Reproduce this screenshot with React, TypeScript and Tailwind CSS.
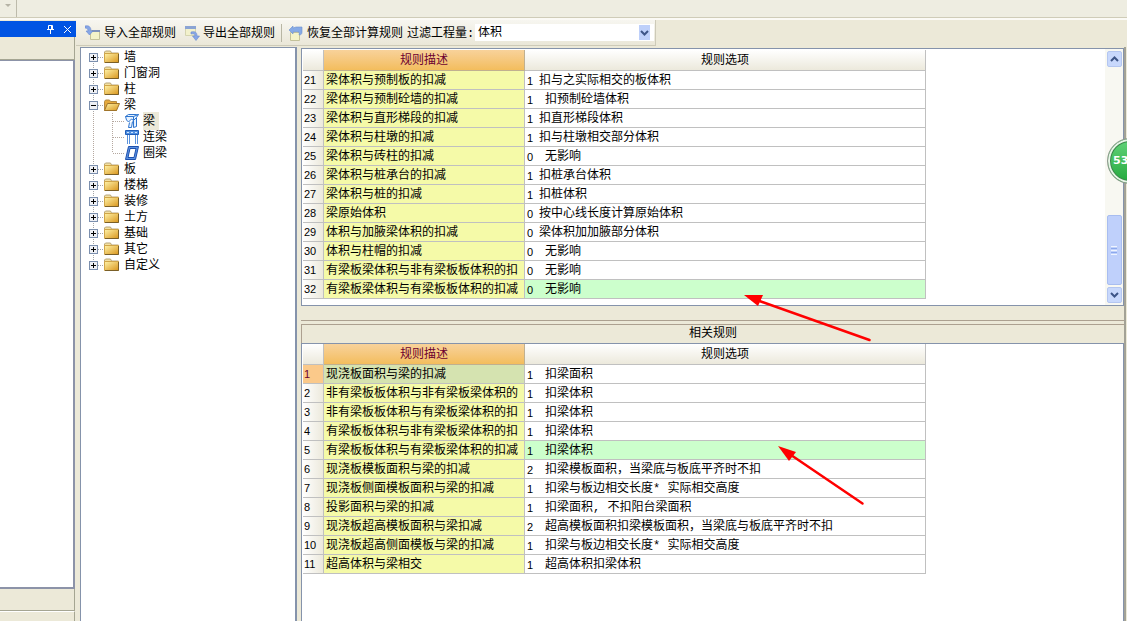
import { useState } from 'react';
import clsx from 'clsx';

interface Rule {
  id: number;
  name: string;
  code: number;
  option: string;
  tight?: boolean;
  marked?: boolean;
  current?: boolean;
}

const rules: Rule[] = [
  { id: 21, name: '梁体积与预制板的扣减', code: 1, option: '扣与之实际相交的板体积', tight: true },
  { id: 22, name: '梁体积与预制砼墙的扣减', code: 1, option: '扣预制砼墙体积' },
  { id: 23, name: '梁体积与直形梯段的扣减', code: 1, option: '扣直形梯段体积', tight: true },
  { id: 24, name: '梁体积与柱墩的扣减', code: 1, option: '扣与柱墩相交部分体积', tight: true },
  { id: 25, name: '梁体积与砖柱的扣减', code: 0, option: '无影响' },
  { id: 26, name: '梁体积与桩承台的扣减', code: 1, option: '扣桩承台体积', tight: true },
  { id: 27, name: '梁体积与桩的扣减', code: 1, option: '扣桩体积', tight: true },
  { id: 28, name: '梁原始体积', code: 0, option: '按中心线长度计算原始体积', tight: true },
  { id: 29, name: '体积与加腋梁体积的扣减', code: 0, option: '梁体积加加腋部分体积', tight: true },
  { id: 30, name: '体积与柱帽的扣减', code: 0, option: '无影响' },
  { id: 31, name: '有梁板梁体积与非有梁板板体积的扣', code: 0, option: '无影响' },
  { id: 32, name: '有梁板梁体积与有梁板板体积的扣减', code: 0, option: '无影响', marked: true },
];

const relatedRules: Rule[] = [
  { id: 1, name: '现浇板面积与梁的扣减', code: 1, option: '扣梁面积', current: true },
  { id: 2, name: '非有梁板板体积与非有梁板梁体积的', code: 1, option: '扣梁体积' },
  { id: 3, name: '非有梁板板体积与有梁板梁体积的扣', code: 1, option: '扣梁体积' },
  { id: 4, name: '有梁板板体积与非有梁板梁体积的扣', code: 1, option: '扣梁体积' },
  { id: 5, name: '有梁板板体积与有梁板梁体积的扣减', code: 1, option: '扣梁体积', marked: true },
  { id: 6, name: '现浇板模板面积与梁的扣减', code: 2, option: '扣梁模板面积，当梁底与板底平齐时不扣' },
  { id: 7, name: '现浇板侧面模板面积与梁的扣减', code: 1, option: '扣梁与板边相交长度* 实际相交高度' },
  { id: 8, name: '投影面积与梁的扣减', code: 1, option: '扣梁面积, 不扣阳台梁面积' },
  { id: 9, name: '现浇板超高模板面积与梁扣减', code: 2, option: '超高模板面积扣梁模板面积，当梁底与板底平齐时不扣' },
  { id: 10, name: '现浇板超高侧面模板与梁的扣减', code: 1, option: '扣梁与板边相交长度* 实际相交高度' },
  { id: 11, name: '超高体积与梁相交', code: 1, option: '超高体积扣梁体积' },
];

const categories = ['墙', '门窗洞', '柱', '梁', '板', '楼梯', '装修', '土方', '基础', '其它', '自定义'];
const beams = ['梁', '连梁', '圈梁'];

function ImportIcon() {
  return (
    <svg width="16" height="16" viewBox="0 0 16 16" aria-hidden="true">
      <path d="M5.500 5.500h9v9h-9z" fill="#f4f3c9" stroke="#c4c29a" />
      <path d="M7 5h8v2H7z" fill="#7f92ba" />
      <path d="M0 1c4-1 6 1 6 5h2L4.500 10 1 6h2c0-2-1-3-3-3z" fill="#86a6e6" stroke="#6a8ad0" strokeWidth=".6" />
    </svg>
  );
}

function ExportIcon() {
  return (
    <svg width="16" height="16" viewBox="0 0 16 16" aria-hidden="true">
      <path d="M1.500 1.500h10v9h-10z" fill="#f2f1cc" stroke="#d5d4b0" />
      <path d="M1 1h11v3H1z" fill="#8ba4d4" />
      <path d="M7 7c4-1 6 0 6 4h2.500L12 15.500 8.500 11H11c0-2-1-2.500-4-2z" fill="#86a6e6" stroke="#6a8ad0" strokeWidth=".6" />
    </svg>
  );
}

function RestoreIcon() {
  return (
    <svg width="16" height="16" viewBox="0 0 16 16" aria-hidden="true">
      <path d="M2.500 7.500h9v8h-9z" fill="#f4f3c9" stroke="#c4c29a" />
      <path d="M1 5l4-4v2l3-1h6v5c0 2-1 3-3 3 1-3 0-4-6-3v2z" fill="#86aae6" stroke="#6c90d0" strokeWidth=".6" />
    </svg>
  );
}

function FolderIcon({ open }: { open?: boolean }) {
  return (
    <svg width="16" height="16" viewBox="0 0 16 16" aria-hidden="true">
      <defs>
        <linearGradient id="folder" x1="0" y1="0" x2="1" y2="1">
          <stop offset="0" stopColor="#fff3a8" />
          <stop offset="1" stopColor="#d9951c" />
        </linearGradient>
      </defs>
      {open ? (
        <>
          <path d="M.5 13.500V4.500l1-1.500h4l1 1.500h6v9z" fill="#e5a93b" stroke="#b58a42" />
          <path d="M.5 13.500l3-7h12l-3 7z" fill="url(#folder)" stroke="#a0742a" />
        </>
      ) : (
        <>
          <path d="M.5 5V3l1-1h5l1 2h7v2z" fill="#f3e0a0" stroke="#b8a578" />
          <path d="M.5 4.500h14v9H.5z" fill="url(#folder)" stroke="#d0a548" />
          <path d="M14.500 5v8.500H1" fill="none" stroke="#7a5f28" />
        </>
      )}
    </svg>
  );
}

function BeamIcon({ kind }: { kind: number }) {
  return (
    <svg width="14" height="16" viewBox="0 0 14 16" fill="#e6f2ff" stroke="#2d74cf" aria-hidden="true">
      {kind === 0 && (
        <>
          <path d="M.5 3.500l3-2h10l-2 3v9l-3 1v-7l-2-1.500-3 3-2-2z" />
          <path d="M.5 3.500h8l5-2M8.500 3.500v4l3-3M4.500 9.500l-1 5h3l1-6" />
        </>
      )}
      {kind === 1 && (
        <>
          <path d="M.5 1.500h13v4H.5z" fill="#4f8fe0" stroke="#1f5db8" />
          <path d="M2.500 6v9M4.500 6v9M10.500 6v9M12.500 6v9" stroke="#5a92dd" />
          <path d="M2 3.500h2M6 3.500h2M10 3.500h2" stroke="#cfe3ff" />
        </>
      )}
      {kind === 2 && (
        <>
          <path d="M3.500 1.500h10l-3 13H.5z" fill="#5b93e2" stroke="#1d4fae" />
          <path d="M5 3.500h6l-2 9H3z" fill="#fff" stroke="#1d4fae" />
        </>
      )}
    </svg>
  );
}

// dotted guide plus the plus/minus box
function Expander({ open, first, last }: { open: boolean; first: boolean; last: boolean }) {
  return (
    <svg width="15" height="16" viewBox="0 0 15 16" aria-hidden="true">
      <path d={first ? 'M4.500 8v8' : last ? 'M4.500 0v8' : 'M4.500 0v16'} stroke="#a5a5a5" strokeDasharray="1 1" />
      <path d="M9 8.500h6" stroke="#a5a5a5" strokeDasharray="1 1" />
      <rect x=".5" y="4.500" width="8" height="8" fill="#eef0f5" stroke="#7b8fae" />
      <path d={open ? 'M2 8.500h5' : 'M2 8.500h5M4.500 6v5'} stroke="#000" />
    </svg>
  );
}

function Tree() {
  const [openName, setOpenName] = useState('梁');

  return (
    <nav className="w-[217px] shrink-0 border border-r-2 border-b-0 border-[#8593ab] bg-white pt-px pl-2">
      <ul>
        {categories.map((name, i) => {
          const open = name === openName;
          return (
            <li key={name}>
              <div className="flex h-4 items-center">
                <button type="button" aria-label={name} aria-expanded={open} onClick={() => setOpenName(open ? '' : name)}>
                  <Expander open={open} first={i === 0} last={i === categories.length - 1} />
                </button>
                <FolderIcon open={open} />
                <span className="pt-0.5 pl-1">{name}</span>
              </div>
              {open && (
                <ul>
                  {beams.map((beam, j) => (
                    <li key={beam} className="flex h-4 items-center">
                      <svg width="36" height="16" viewBox="0 0 36 16" aria-hidden="true">
                        <path
                          d={j === beams.length - 1 ? 'M4.500 0v16M23.500 0v8M24 8.500h12' : 'M4.500 0v16M23.500 0v16M24 8.500h12'}
                          fill="none"
                          stroke="#b5a8a0"
                          strokeDasharray="1 1"
                        />
                      </svg>
                      <BeamIcon kind={j} />
                      <a href="#rules" className={clsx('ml-1 pt-0.5 pr-1', j === 0 && 'bg-[#ece9d8]')}>
                        {beam}
                      </a>
                    </li>
                  ))}
                </ul>
              )}
            </li>
          );
        })}
      </ul>
    </nav>
  );
}

function RuleTable({ rows }: { rows: Rule[] }) {
  return (
    <table className="ml-px w-[623px] table-fixed border-separate border-spacing-0">
      <colgroup>
        <col className="w-[21px]" />
        <col className="w-[201px]" />
        <col className="w-[401px]" />
      </colgroup>
      <thead>
        <tr className="h-[21px]">
          <th className="border-r border-b border-[#c0c0c0] bg-linear-to-b from-white to-[#ece9dc]" />
          <th className="border-r border-b border-[#c0b090] bg-linear-to-b from-[#f8d29a] to-[#f3bd5c] p-0 pt-0.5 font-normal text-[#6b0030]">
            规则描述
          </th>
          <th className="border-r border-b border-[#c0c0c0] bg-linear-to-b from-white to-[#ece9dc] p-0 pt-0.5 font-normal">
            规则选项
          </th>
        </tr>
      </thead>
      <tbody>
        {rows.map((rule) => (
          <tr key={rule.id} className="h-[19px]">
            <td
              className={clsx(
                'border-r border-b border-[#c0c0c0] p-0 pl-px font-["Liberation_Sans",sans-serif] text-[11px]',
                rule.current ? 'bg-[#fbc98a] text-[#6b0030]' : 'bg-linear-to-r from-white to-[#ece9dc]',
              )}
            >
              {rule.id}
            </td>
            <td
              className={clsx(
                'overflow-hidden border-r border-b border-[#c0c0c0] p-0 pt-0.5 pl-0.5 whitespace-nowrap',
                rule.current ? 'bg-[#d5e3b0]' : 'bg-[#f5faa8]',
              )}
            >
              {rule.name}
            </td>
            <td className={clsx('border-r border-b border-[#c0c0c0] p-0 pt-0.5 pl-0.5', rule.marked && 'bg-[#ccffcc]')}>
              <div className="flex items-center">
                <span className={clsx('font-["Liberation_Sans",sans-serif] text-[11px]', rule.tight ? 'w-3' : 'w-[18px]')}>
                  {rule.code}
                </span>
                <span className="whitespace-nowrap">{rule.option}</span>
              </div>
            </td>
          </tr>
        ))}
      </tbody>
    </table>
  );
}

function Chevron({ up }: { up?: boolean }) {
  return (
    <svg width="9" height="6" viewBox="0 0 9 6" fill="none" stroke="#3d5587" strokeWidth="2" aria-hidden="true">
      <path d={up ? 'M1 5l3.500-3.500L8 5' : 'M1 1l3.500 3.500L8 1'} />
    </svg>
  );
}

function ScrollBar() {
  return (
    <div className="flex w-[18px] shrink-0 flex-col items-center bg-[#f8f8f2] py-0.5">
      <button type="button" aria-label="向上" className="flex h-4 w-[15px] items-center justify-center rounded-xs border border-[#b4c6f0] bg-[#c8d8fc]">
        <Chevron up />
      </button>
      <div className="flex-1" />
      <div className="mb-0.5 flex h-[70px] w-[15px] flex-col items-center justify-center gap-px rounded-xs border border-[#a8bdf0] bg-[#bfd0fb]">
        <i className="h-px w-1.5 bg-[#eef4fe]" />
        <i className="h-px w-1.5 bg-[#8ca9ec]" />
        <i className="h-px w-1.5 bg-[#eef4fe]" />
        <i className="h-px w-1.5 bg-[#8ca9ec]" />
        <i className="h-px w-1.5 bg-[#eef4fe]" />
      </div>
      <button type="button" aria-label="向下" className="flex h-4 w-[15px] items-center justify-center rounded-xs border border-[#b4c6f0] bg-[#c8d8fc]">
        <Chevron />
      </button>
    </div>
  );
}

function SidePanel() {
  return (
    <aside className="flex w-[76px] shrink-0 flex-col pt-px">
      <div className="flex h-4 items-center justify-end gap-2 bg-[#0054e3] pr-1">
        <button type="button" aria-label="固定">
          <svg width="9" height="10" viewBox="0 0 9 10" fill="none" stroke="#fff" aria-hidden="true">
            <path d="M2.500 5.500v-4h4v4M5.500 1.500v4M1 5.500h7M4.500 6v4" />
          </svg>
        </button>
        <button type="button" aria-label="关闭">
          <svg width="9" height="9" viewBox="0 0 9 9" stroke="#fff" aria-hidden="true">
            <path d="M1 1l7 7M8 1L1 8" />
          </svg>
        </button>
      </div>
      <div className="mr-px h-[23px] border-r border-b border-[#a5a592]" />
      <div className="mr-px flex-1 border-t border-r-2 border-b-2 border-[#8c93a8] bg-white" />
      <div className="mr-px h-[22px] border-r border-b border-[#a5a592]" />
      <div className="mr-px h-[10px] border-t border-r border-t-white border-r-[#a5a592]" />
    </aside>
  );
}

function Toolbar() {
  return (
    <div className="flex h-[26px] w-[580px] items-center border-r border-b border-[#cdcab8] bg-linear-to-b from-[#f7f6f0] to-[#eae7d8] pl-[9px]">
      <button type="button" className="flex items-center gap-[3px] whitespace-nowrap">
        <ImportIcon />
        <span className="pt-0.5">导入全部规则</span>
      </button>
      <button type="button" className="ml-2 flex items-center gap-[3px] whitespace-nowrap">
        <ExportIcon />
        <span className="pt-0.5">导出全部规则</span>
      </button>
      <div className="mx-1.5 h-[18px] w-px bg-[#b8b6a4]" />
      <button type="button" className="flex items-center gap-[3px] whitespace-nowrap">
        <RestoreIcon />
        <span className="pt-0.5">恢复全部计算规则</span>
      </button>
      <label htmlFor="quantity" className="ml-1 w-[68px] pt-0.5 whitespace-nowrap">
        过滤工程量:
      </label>
      <div className="relative mr-px flex-1">
        <select id="quantity" className="block h-[17px] w-full appearance-none bg-white pl-[3px] leading-[14px]">
          <option>体积</option>
        </select>
        <span className="pointer-events-none absolute top-px right-1 flex h-[15px] w-[11px] items-center justify-center bg-[#bed0fa]">
          <Chevron />
        </span>
      </div>
    </div>
  );
}

export default function App() {
  return (
    <div className='relative flex min-h-screen flex-col overflow-hidden bg-[#ece9d8] font-["Liberation_Mono","Noto_Sans_CJK_SC",sans-serif] text-[12px] leading-4 text-black'>
      <header className="h-5 border-b-2 border-[#fbfaf5] bg-[#eeede1]">
        <div className="flex h-[18px] border-b border-[#cfccb8]">
          <div className="flex w-[17px] justify-center border-r border-[#bdbbab] pt-1">
            <svg width="6" height="3" viewBox="0 0 6 3" aria-hidden="true">
              <path d="M0 0h6L3 3z" fill="#b5b3a5" />
            </svg>
          </div>
        </div>
      </header>

      <div className="flex flex-1">
        <SidePanel />
        <div className="flex min-w-0 flex-1 flex-col">
          <Toolbar />
          <div className="flex flex-1 gap-1 pt-px pr-px pl-1">
            <Tree />
            <main id="rules" className="flex min-w-0 flex-1 flex-col pt-px">
              <section className="flex border border-[#8593ab] bg-white">
                <div className="min-w-0 flex-1 pt-px pb-1.5">
                  <RuleTable rows={rules} />
                </div>
                <ScrollBar />
              </section>
              <div className="h-[15px] border-b border-[#aca090]" />
              <section className="mt-[3px] flex flex-1 flex-col">
                <h2 className="h-[19px] border-t border-l border-[#aca090] pt-px text-center">相关规则</h2>
                <div className="flex-1 border border-b-0 border-[#8593ab] bg-white">
                  <RuleTable rows={relatedRules} />
                </div>
              </section>
            </main>
            <div className="-ml-1 w-0.5 bg-[#a3a296]" />
          </div>
        </div>
      </div>

      {/* hand-drawn pointers over the highlighted rows */}
      <svg className="pointer-events-none absolute top-[290px] left-[740px]" width="134" height="220" viewBox="0 0 134 220" fill="#f00" aria-hidden="true">
        <path d="M18 10.500L129.500 50" stroke="#f00" strokeWidth="2.500" strokeLinecap="round" />
        <path d="M4 5l19 0-5 11z" />
        <path d="M51 165L122.500 213.500" stroke="#f00" strokeWidth="2.500" strokeLinecap="round" />
        <path d="M38 156l18 6-7 9z" />
      </svg>

      <div className="absolute top-[138px] -right-[26px] flex size-[46px] items-center rounded-full border border-[#8f9a8f] bg-linear-to-b from-[#62d47a] to-[#1fa83c] pl-[5px] font-['DejaVu_Sans',sans-serif] text-[11px] font-bold text-white shadow-[inset_0_0_0_2px_#e8f5e8,inset_0_0_0_3px_#3c8a4c]">
        53
      </div>
    </div>
  );
}
